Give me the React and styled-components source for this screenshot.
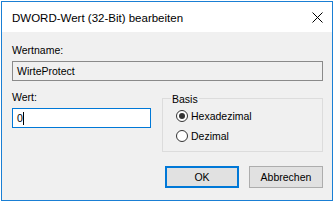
import React from "react";
import styled, { createGlobalStyle } from "styled-components";

const GlobalStyle = createGlobalStyle`
  html, body {
    margin: 0;
    padding: 0;
    background: #ffffff;
  }
  body {
    font-family: "Liberation Sans", Arial, sans-serif;
    color: #000;
  }
`;

// Styled Components
const Window = styled.div`
  box-sizing: border-box;
  margin: 1px 0 0 1px;
  width: 332px;
  height: 200px;
  border: 1px solid #1a7fd4;
  background: #f0f0f0;
  display: flex;
  flex-direction: column;
`;

const TitleBar = styled.div`
  height: 30px;
  background: #ffffff;
  display: flex;
  align-items: center;
  justify-content: space-between;
  padding: 1px 9px 0 10px;
  box-sizing: border-box;
`;

const Title = styled.span`
  font-size: 11.5px;
  color: #000;
`;

const CloseIcon = styled.svg`
  width: 11px;
  height: 11px;
  display: block;
`;

const Body = styled.div`
  flex: 1;
  display: flex;
  flex-direction: column;
  padding: 11px 9px 0 10px;
  font-size: 10.5px;
`;

const Label = styled.div`
  line-height: 14px;
  height: 14px;
`;

const Field = styled.div`
  box-sizing: border-box;
  height: 20px;
  margin-top: 4px;
  padding-left: 4px;
  display: flex;
  align-items: center;
  border: 1px solid ${(p) => (p.$active ? "#0078d7" : "#8a8a8a")};
  background: ${(p) => (p.$active ? "#ffffff" : "#f0f0f0")};
`;

const Caret = styled.span`
  display: inline-block;
  width: 1px;
  height: 13px;
  background: #000;
`;

const Row = styled.div`
  margin-top: 9px;
  display: grid;
  grid-template-columns: 139px 1fr;
  column-gap: 11px;
  align-items: start;
`;

const Group = styled.div`
  position: relative;
  box-sizing: border-box;
  margin-top: 8px;
  height: 54px;
  border: 1px solid #dcdcdc;
  padding: 9px 0 0 13px;
  display: flex;
  flex-direction: column;
  gap: 4px;
`;

const Legend = styled.span`
  position: absolute;
  top: -6px;
  left: 8px;
  padding: 0 1px;
  background: #f0f0f0;
  line-height: 12px;
`;

const RadioRow = styled.div`
  height: 16px;
  display: flex;
  align-items: center;
  gap: 3px;
`;

const RadioCircle = styled.span`
  box-sizing: border-box;
  width: 12px;
  height: 12px;
  border-radius: 50%;
  border: 1px solid #333;
  background: #fff;
  display: flex;
  align-items: center;
  justify-content: center;

  &::after {
    content: "";
    width: 6px;
    height: 6px;
    border-radius: 50%;
    background: ${(p) => (p.$checked ? "#333" : "transparent")};
  }
`;

const ButtonRow = styled.div`
  margin-top: 14px;
  display: flex;
  justify-content: flex-end;
  gap: 10px;
`;

const Button = styled.button`
  box-sizing: border-box;
  width: 74px;
  height: 22px;
  padding: 0;
  font-family: inherit;
  font-size: 10.5px;
  color: #000;
  background: #e1e1e1;
  border: ${(p) => (p.$default ? "2px solid #0078d7" : "1px solid #adadad")};
`;

const Radio = ({ checked, label }) => (
  <RadioRow>
    <RadioCircle $checked={checked} />
    <span>{label}</span>
  </RadioRow>
);

const App = () => (
  <>
    <GlobalStyle />
    <Window>
      <TitleBar>
        <Title>DWORD-Wert (32-Bit) bearbeiten</Title>
        <CloseIcon viewBox="0 0 11 11">
          <path d="M0.5 0.5 L10.5 10.5 M10.5 0.5 L0.5 10.5" stroke="#000" strokeWidth="1" />
        </CloseIcon>
      </TitleBar>
      <Body>
        <Label>Wertname:</Label>
        <Field>WirteProtect</Field>
        <Row>
          <div>
            <Label>Wert:</Label>
            <Field $active>
              0<Caret />
            </Field>
          </div>
          <Group>
            <Legend>Basis</Legend>
            <Radio checked label="Hexadezimal" />
            <Radio label="Dezimal" />
          </Group>
        </Row>
        <ButtonRow>
          <Button $default>OK</Button>
          <Button>Abbrechen</Button>
        </ButtonRow>
      </Body>
    </Window>
  </>
);

export default App;
